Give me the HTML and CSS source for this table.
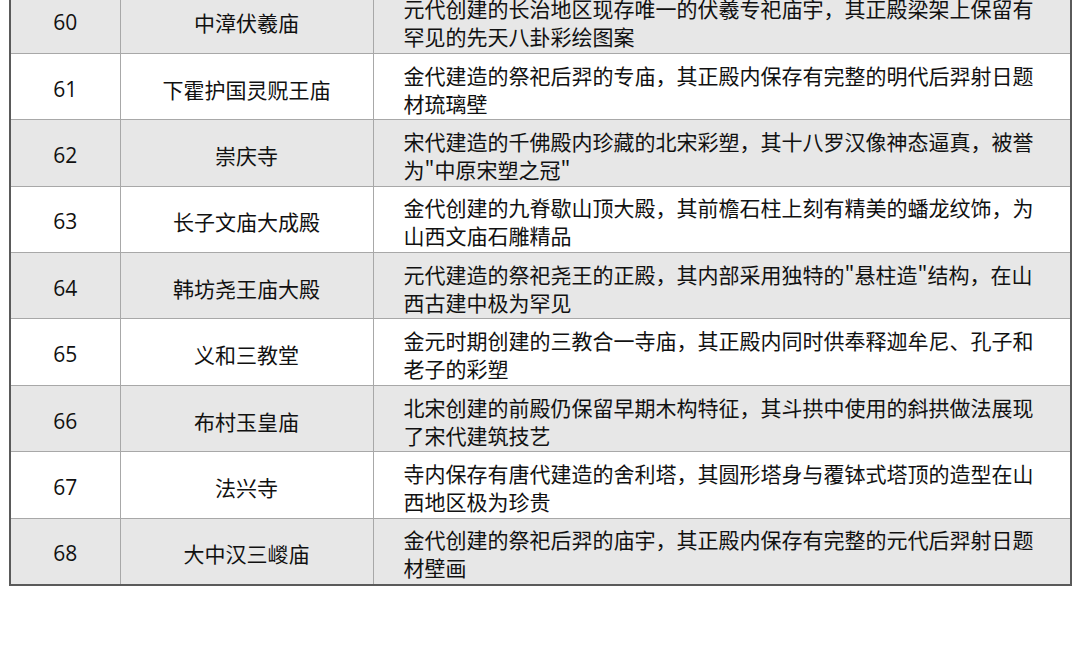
FILE: index.html
```html
<!DOCTYPE html>
<html lang="zh-CN">
<head>
<meta charset="utf-8">
<link rel="stylesheet" href="styles.css">
</head>
<body>
<table class="list">
<colgroup><col class="c-num"><col class="c-name"><col class="c-desc"></colgroup>
<tbody>
<tr class="alt"><td class="num">60</td><td class="name">中漳伏羲庙</td><td class="desc">元代创建的长治地区现存唯一的伏羲专祀庙宇，其正殿梁架上保留有罕见的先天八卦彩绘图案</td></tr>
<tr><td class="num">61</td><td class="name">下霍护国灵贶王庙</td><td class="desc">金代建造的祭祀后羿的专庙，其正殿内保存有完整的明代后羿射日题材琉璃壁</td></tr>
<tr class="alt"><td class="num">62</td><td class="name">崇庆寺</td><td class="desc">宋代建造的千佛殿内珍藏的北宋彩塑，其十八罗汉像神态逼真，被誉为"中原宋塑之冠"</td></tr>
<tr><td class="num">63</td><td class="name">长子文庙大成殿</td><td class="desc">金代创建的九脊歇山顶大殿，其前檐石柱上刻有精美的蟠龙纹饰，为山西文庙石雕精品</td></tr>
<tr class="alt"><td class="num">64</td><td class="name">韩坊尧王庙大殿</td><td class="desc">元代建造的祭祀尧王的正殿，其内部采用独特的"悬柱造"结构，在山西古建中极为罕见</td></tr>
<tr><td class="num">65</td><td class="name">义和三教堂</td><td class="desc">金元时期创建的三教合一寺庙，其正殿内同时供奉释迦牟尼、孔子和老子的彩塑</td></tr>
<tr class="alt"><td class="num">66</td><td class="name">布村玉皇庙</td><td class="desc">北宋创建的前殿仍保留早期木构特征，其斗拱中使用的斜拱做法展现了宋代建筑技艺</td></tr>
<tr><td class="num">67</td><td class="name">法兴寺</td><td class="desc">寺内保存有唐代建造的舍利塔，其圆形塔身与覆钵式塔顶的造型在山西地区极为珍贵</td></tr>
<tr class="alt"><td class="num">68</td><td class="name">大中汉三嵕庙</td><td class="desc">金代创建的祭祀后羿的庙宇，其正殿内保存有完整的元代后羿射日题材壁画</td></tr>
</tbody>
</table>
</body>
</html>
```
FILE: styles.css
```css
html, body {
  margin: 0;
  padding: 0;
  background: #ffffff;
}
body {
  font-family: "Open Sans", "Noto Sans CJK SC", sans-serif;
  color: #111111;
  overflow: hidden;
}
.list {
  margin: -14px 0 0 9px;
  width: 1063px;
  border-collapse: collapse;
  table-layout: fixed;
  border: 2px solid #5a5a5a;
}
.c-num { width: 110px; }
.c-name { width: 253px; }
.c-desc { width: auto; }
.list td {
  border: 1px solid #a8a8a8;
  height: 66.4px;
  box-sizing: border-box;
  padding: 4px 0 0 0;
  vertical-align: middle;
  font-size: 21px;
  line-height: 28px;
}
.list tr.alt td {
  background: #e7e7e7;
}
.num, .name {
  text-align: center;
}
.num {
  font-family: "Open Sans", sans-serif;
}
.name {
  font-family: "Noto Sans CJK SC", sans-serif;
}
.list td.desc {
  font-family: "Noto Sans CJK SC", sans-serif;
  padding-left: 30px;
  padding-right: 26px;
}
```
